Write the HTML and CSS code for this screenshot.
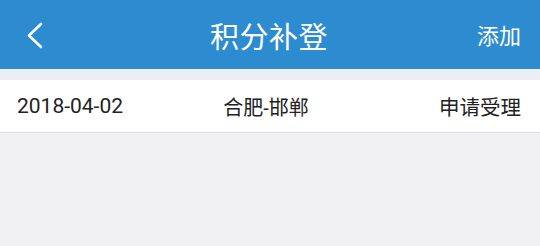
FILE: index.html
```html
<!DOCTYPE html>
<html lang="zh-CN">
<head>
    <meta charset="UTF-8">
    <meta name="viewport" content="width=device-width, initial-scale=1.0">
    <title>积分补登</title>
    <link rel="stylesheet" href="styles.css">
</head>
<body>
    <div class="header">
        <div class="back">
            <svg width="18" height="27" viewBox="0 0 18 27">
                <polyline points="15,2 3,13.5 15,25" fill="none" stroke="#fff" stroke-width="2.6" stroke-linecap="round" stroke-linejoin="round"/>
            </svg>
        </div>
        <h1 class="title">积分补登</h1>
        <div class="action">添加</div>
    </div>

    <div class="list">
        <div class="row">
            <span class="date">2018-04-02</span>
            <span class="route">合肥-邯郸</span>
            <span class="status">申请受理</span>
        </div>
    </div>
</body>
</html>
```

FILE: styles.css
```css
body {
    margin: 0;
    background-color: #f1f0f3;
    font-family: Roboto, "Noto Sans CJK SC", sans-serif;
    color: #222;
}

.header {
    height: 69px;
    background-color: #2d8bd0;
    display: grid;
    grid-template-columns: 1fr auto 1fr;
    align-items: center;
    padding: 0 19px;
    color: white;
}

.back {
    display: flex;
    align-items: center;
    padding-top: 1px;
    margin-left: 7px;
}

.title {
    margin: 0 0 0 -2px;
    font-weight: normal;
    font-size: 29px;
    letter-spacing: 0.5px;
}

.action {
    text-align: right;
    font-size: 22px;
    padding-bottom: 1px;
}

.list {
    padding-top: 11px;
    background-color: #eceef3;
}

.row {
    height: 52px;
    background: white;
    border-bottom: 1px solid #dcdcdf;
    display: grid;
    grid-template-columns: 1fr 1fr 1fr;
    align-items: center;
    padding: 0 19px 0 17px;
    font-size: 20px;
}

.date {
    font-size: 21px;
}

.route {
    text-align: center;
    margin-right: 6px;
}

.status {
    text-align: right;
    font-size: 20.5px;
}
```
